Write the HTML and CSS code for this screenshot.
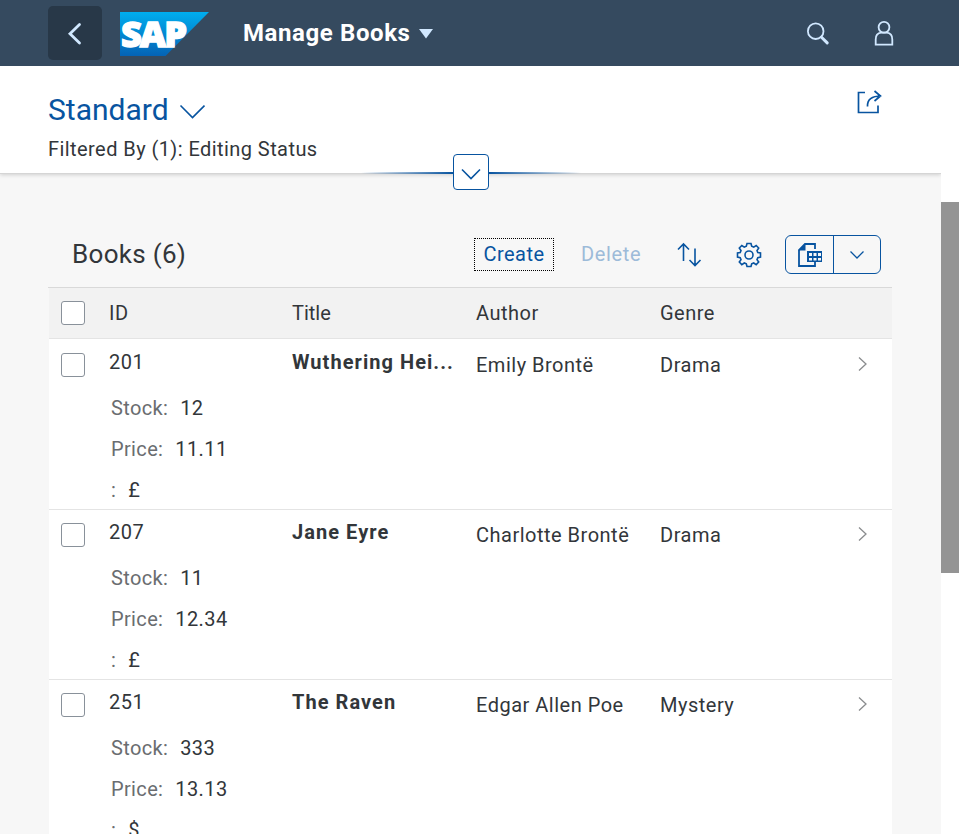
FILE: index.html
```html
<!DOCTYPE html>
<html lang="en">
<head>
<meta charset="utf-8">
<title>Manage Books</title>
<link rel="stylesheet" href="styles.css">
</head>
<body>
<header class="shell">
  <button class="back" aria-label="Back"><svg width="54" height="54" viewBox="0 0 54 54"><path d="M31.5 18.500 22 27.700l9.500 9.300" /></svg></button>
  <svg class="logo" width="89" height="44" viewBox="0 0 89 44">
    <defs><linearGradient id="blue" x1="0" y1="0" x2="0" y2="1"><stop offset="0" stop-color="#00aeef"/><stop offset="1" stop-color="#0463b5"/></linearGradient></defs>
    <path d="M0 0h89L45.500 44H0z" fill="url(#blue)"/>
    <text class="logo-text" x="1" y="35" textLength="64" lengthAdjust="spacingAndGlyphs">SAP</text>
  </svg>
  <h1 class="app-title">Manage Books</h1>
  <svg class="title-arrow" width="14" height="10" viewBox="0 0 14 10"><path d="M0 0h14L7 9.500z"/></svg>
  <svg class="shell-icon search" width="24" height="24" viewBox="0 0 24 24"><circle cx="9.700" cy="9.200" r="7.800"/><path class="thick" d="m15.500 15.200 5.700 5.700"/></svg>
  <svg class="shell-icon user" width="24" height="28" viewBox="0 0 24 28"><circle cx="12" cy="7.300" r="5.400"/><path d="M3.700 24.700v-5.200q0-6.400 5.500-6.800h5.600q5.500.4 5.500 6.800v5.200z"/></svg>
</header>
<div class="page">
  <main class="content">
    <section class="filter-head">
      <div class="head-row">
        <div class="variant"><h2>Standard</h2><svg width="26" height="16" viewBox="0 0 26 16"><path d="m1.500 1.500 12 12 12-12"/></svg></div>
        <svg class="share" width="28" height="26" viewBox="0 0 28 26"><path d="M9 2.500H2.500v20H22v-7M11.500 16.500Q11 6 25 6M18.500 1l6 5-6 5"/></svg>
      </div>
      <p class="filtered">Filtered By (1): Editing Status</p>
      <div class="expander"><span class="fade left"></span><button aria-label="Expand"><svg width="20" height="12" viewBox="0 0 20 12"><path d="m1 1.500 9 9 9-9"/></svg></button><span class="fade right"></span></div>
    </section>
    <section class="books">
      <div class="toolbar">
        <h3>Books (6)</h3>
        <button class="create">Create</button>
        <button class="delete">Delete</button>
        <svg class="tool sort" width="28" height="26" viewBox="0 0 28 26"><path d="M7.500 19V2M2 7.500l5.500-5.500 5.500 5.500M19 6.500v17M13.500 18l5.500 5.500 5.500-5.500"/></svg>
        <svg class="tool gear" width="26" height="26" viewBox="-13 -13 26 26"><circle r="4"/><path d="M-2-11.500H2L2.700-8.700 4.700-7.800 7.200-9.500 9.700-7 8-4.500 8.800-2.500 11.500-2V2L8.800 2.600 8 4.600 9.700 7 7.200 9.600 4.700 8 2.700 8.800 2 11.500H-2L-2.700 8.800-4.700 8-7.200 9.600-9.700 7-8 4.600-8.800 2.600-11.500 2V-2L-8.800-2.500-8-4.500-9.700-7-7.200-9.500-4.700-7.800-2.700-8.700z"/></svg>
        <div class="split">
          <span class="export"><svg width="26" height="26" viewBox="0 0 26 26"><path class="doc" d="M18 7V2H8L2 8v16h16v-4"/><path class="fill" d="M8.500 1v7.500H1zM10 9h15v11H10z"/><path class="cells" d="M12 11h3v3h-3zm4.500 0h3v3h-3zm4.500 0h3v3h-3zm-9 5h3v2.500h-3zm4.500 0h3v2.500h-3zm4.500 0h3v2.500h-3z"/></svg></span>
          <span class="more"><svg width="16" height="10" viewBox="0 0 16 10"><path d="m1.500 1.500 6.500 6.500 6.500-6.500"/></svg></span>
        </div>
      </div>
      <div class="table">
        <div class="row columns"><span class="check"></span><span>ID</span><span class="narrow">Title</span><span>Author</span><span>Genre</span></div>
        <div class="item first">
          <div class="row"><span class="check"></span><span class="id">201</span><span class="title">Wuthering Hei...</span><span>Emily Brontë</span><span>Drama</span><svg class="nav" width="10" height="16" viewBox="0 0 10 16"><path d="m1 1.500 7 6.500-7 6.500"/></svg></div>
          <dl><div><dt>Stock:</dt><dd>12</dd></div><div><dt>Price:</dt><dd>11.11</dd></div><div><dt>:</dt><dd>£</dd></div></dl>
        </div>
        <div class="item">
          <div class="row"><span class="check"></span><span class="id">207</span><span class="title">Jane Eyre</span><span>Charlotte Brontë</span><span>Drama</span><svg class="nav" width="10" height="16" viewBox="0 0 10 16"><path d="m1 1.500 7 6.500-7 6.500"/></svg></div>
          <dl><div><dt>Stock:</dt><dd>11</dd></div><div><dt>Price:</dt><dd>12.34</dd></div><div><dt>:</dt><dd>£</dd></div></dl>
        </div>
        <div class="item">
          <div class="row"><span class="check"></span><span class="id">251</span><span class="title">The Raven</span><span>Edgar Allen Poe</span><span>Mystery</span><svg class="nav" width="10" height="16" viewBox="0 0 10 16"><path d="m1 1.500 7 6.500-7 6.500"/></svg></div>
          <dl><div><dt>Stock:</dt><dd>333</dd></div><div><dt>Price:</dt><dd>13.13</dd></div><div><dt>:</dt><dd>$</dd></div></dl>
        </div>
      </div>
    </section>
  </main>
  <div class="scrollbar"><div class="thumb"></div></div>
</div>
</body>
</html>
```
FILE: styles.css
```css
* { box-sizing: border-box; }
body { margin: 0; height: 834px; overflow: hidden; display: flex; flex-direction: column; font: 20px/24px Roboto, sans-serif; letter-spacing: .5px; color: #32363a; background: #fff; }
h1, h2, h3, p, dl, dd { margin: 0; font-weight: 400; }
button { padding: 0; font: inherit; letter-spacing: inherit; background: none; border: 0; }
svg { display: block; flex: none; fill: none; stroke: #0854a0; stroke-width: 1.6; }

.shell { flex: none; height: 66px; padding-left: 48px; display: flex; align-items: center; background: #354a5f; }
.back { width: 54px; height: 54px; border-radius: 5px; background: #283848; }
.back svg { stroke: #d1e8ff; stroke-width: 2.8; stroke-linecap: round; }
.logo { margin: 2px 34px 0 18px; stroke: none; }
.logo-text { font: 800 36px "Open Sans", sans-serif; letter-spacing: -2px; fill: #fff; stroke: #fff; stroke-width: 1.4; }
.app-title { width: 176px; font-size: 24px; font-weight: 700; line-height: 30px; letter-spacing: .6px; color: #fff; white-space: nowrap; }
.title-arrow { margin-top: 2px; fill: #d1e8ff; stroke: none; }
.shell-icon { stroke: #d1e8ff; stroke-width: 1.8; }
.shell-icon .thick { stroke-width: 3; stroke-linecap: round; }
.search { margin-left: 373px; margin-top: 2px; }
.user { margin: 2px 0 0 42px; }

.page { flex: 1; min-height: 0; display: flex; }
.content { width: 941px; overflow: hidden; background: #f7f7f7; }
.filter-head { position: relative; height: 108px; padding: 24px 57px 0 48px; background: #fff; border-bottom: 1px solid #d5d5d5; box-shadow: 0 1px 4px rgba(0,0,0,.16); }
.head-row { display: flex; justify-content: space-between; height: 46px; }
.variant { display: flex; color: #0854a0; }
.variant h2 { width: 131px; font-size: 30px; line-height: 40px; letter-spacing: 0; }
.variant svg { margin-top: 14px; }
.share { stroke-width: 1.7; }
.filtered { line-height: 26px; letter-spacing: .43px; }
.expander { position: absolute; left: 361px; bottom: -17px; display: flex; align-items: center; }
.expander button { width: 36px; height: 36px; display: grid; place-items: center; padding-top: 3px; background: #fff; border: 1px solid #0854a0; border-radius: 4px; }
.fade { width: 92px; height: 2px; margin-top: 2px; }
.left { background: linear-gradient(to right, transparent, #0854a0); }
.right { background: linear-gradient(to left, transparent, #0854a0); }

.books { padding: 48px 49px 0 48px; }
.toolbar { height: 65px; padding: 0 11px 0 24px; display: flex; align-items: center; }
.toolbar h3 { width: 402px; margin-top: -2px; font-size: 26px; line-height: 32px; letter-spacing: .3px; }
.create { width: 80px; height: 33px; padding-bottom: 2px; color: #0854a0; border: 1px dotted #000; }
.delete { width: 60px; margin: -2px 0 0 27px; letter-spacing: .65px; color: #9dbbd9; }
.sort { margin-left: 35px; }
.gear { margin-left: 32px; }
.split { display: flex; width: 96px; height: 39px; margin-left: 23px; border: 1px solid #0854a0; border-radius: 6px; }
.export, .more { display: grid; place-items: center; }
.export { width: 48px; border-right: 1px solid #0854a0; }
.more { flex: 1; }
.more svg { stroke-width: 1.3; }
.doc { stroke-width: 1.8; }
.fill { fill: #0854a0; stroke: none; }
.cells { fill: #f7f7f7; stroke: none; }

.table { border-top: 1px solid #d9d9d9; }
.row { display: grid; grid-template-columns: 48px 183px 184px 184px 197px 1fr; align-items: center; white-space: nowrap; }
.check { width: 24px; height: 24px; background: #fff; border: 1px solid #89919a; border-radius: 3px; }
.columns { height: 51px; margin-left: 1px; padding-left: 12px; background: #f2f2f2; border-bottom: 1px solid #e4e4e4; }
.narrow { letter-spacing: 0; }
.item { height: 170px; margin-left: 1px; padding: 13px 0 0 12px; background: #fff; border-bottom: 1px solid #e4e4e4; }
.first { height: 171px; padding-top: 14px; }
.item .row { height: 24px; }
.id, .title { margin-top: -6px; }
.title { font-weight: 700; letter-spacing: 1.05px; }
.nav { margin: -2px 0 0 1px; stroke: #8a8c8e; stroke-width: 1.3; }
dl { padding: 11px 0 0 50px; line-height: 41px; }
dl div { display: flex; gap: 12px; }
dt { letter-spacing: .35px; color: #6a6d70; }
dd { letter-spacing: .4px; }

.scrollbar { flex: 1; padding-top: 136px; background: #fff; }
.thumb { height: 371px; background: #949494; }
```
